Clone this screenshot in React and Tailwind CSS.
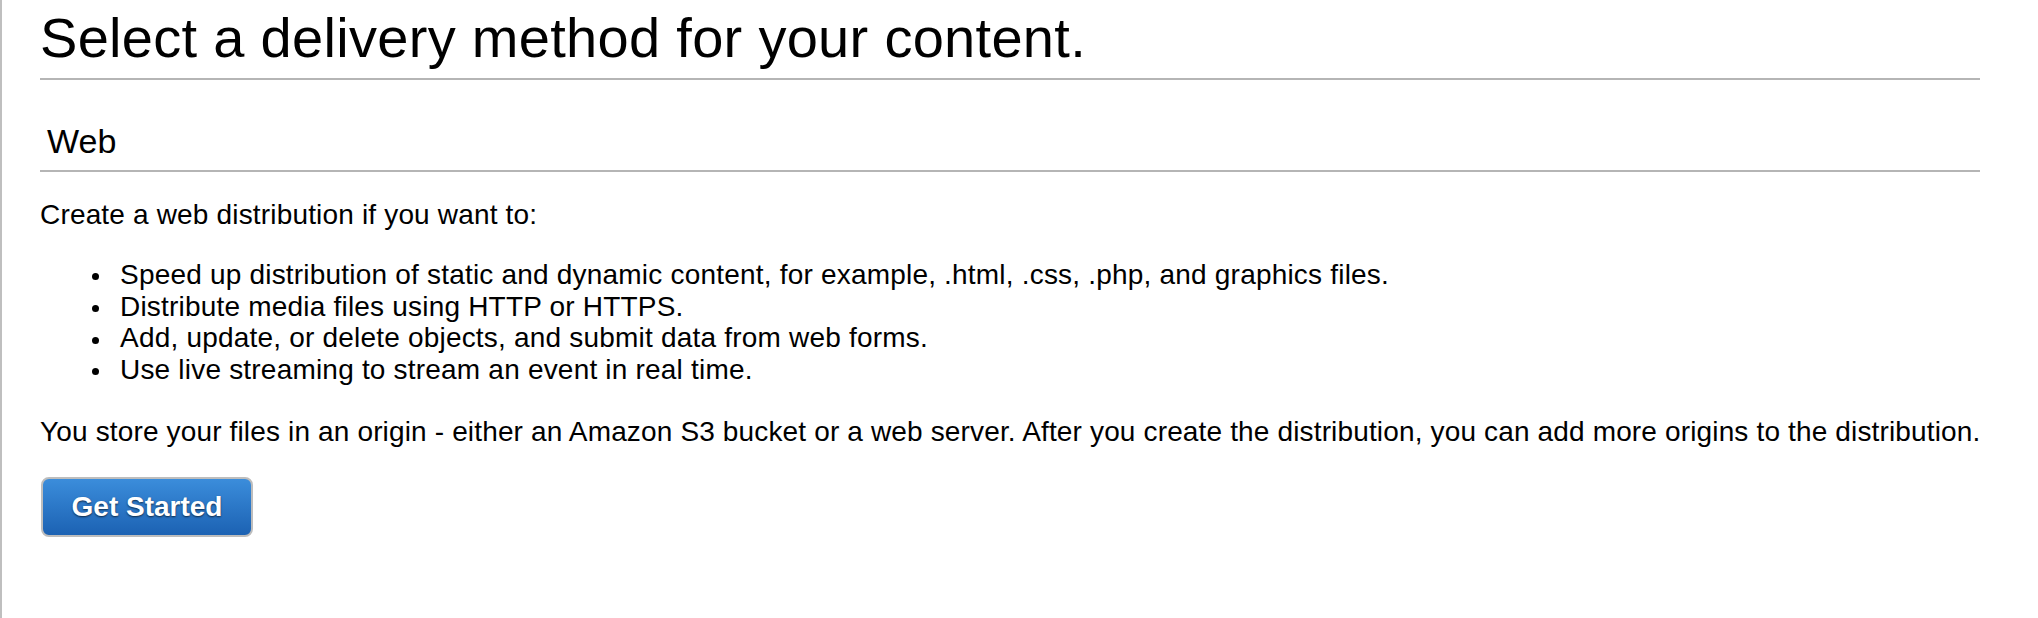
export default function App() {
  const bullets = [
    "Speed up distribution of static and dynamic content, for example, .html, .css, .php, and graphics files.",
    "Distribute media files using HTTP or HTTPS.",
    "Add, update, or delete objects, and submit data from web forms.",
    "Use live streaming to stream an event in real time.",
  ];
  return (
    <div
      className="min-h-[618px] bg-white border-l-2 border-[#bfbfbf] pl-[38px] text-black"
      style={{ fontFamily: '"Liberation Sans", Arial, Helvetica, sans-serif' }}
    >
      <div className="w-[1940px]">
        <h1 className="text-[56px] leading-[64px] font-normal tracking-[0.3px] pt-[6px] pb-[8px] border-b-2 border-[#b5b5b5]">
          Select a delivery method for your content.
        </h1>
        <h2 className="mt-[41px] text-[34px] leading-[40px] font-normal pl-[7px] pb-[9px] border-b-2 border-[#b5b5b5]">
          Web
        </h2>
        <p className="mt-[27px] text-[28px] leading-[32px] tracking-[0.17px]">
          Create a web distribution if you want to:
        </p>
        <ul className="mt-[28px] text-[28px] leading-[31.7px] tracking-[0.2px]">
          {bullets.map((b) => (
            <li key={b} className="pl-[52px] whitespace-nowrap">
              <span className="inline-block w-[7px] h-[7px] rounded-full bg-black align-middle mr-[21px]"></span>
              {b}
            </li>
          ))}
        </ul>
        <p className="mt-[30px] text-[28px] leading-[32px] tracking-[0.15px] whitespace-nowrap">
          You store your files in an origin - either an Amazon S3 bucket or a web server. After you create the distribution, you can add more origins to the distribution.
        </p>
        <button
          type="button"
          className="mt-[29px] ml-[1px] flex items-center justify-center w-[212px] h-[60px] rounded-[8px] border-2 border-[#bdbdbd] bg-gradient-to-b from-[#3b8ddb] to-[#1c62b3] text-white text-[28px] font-bold [text-shadow:0_1px_2px_rgba(0,0,0,0.65)]"
        >
          Get Started
        </button>
      </div>
    </div>
  );
}
